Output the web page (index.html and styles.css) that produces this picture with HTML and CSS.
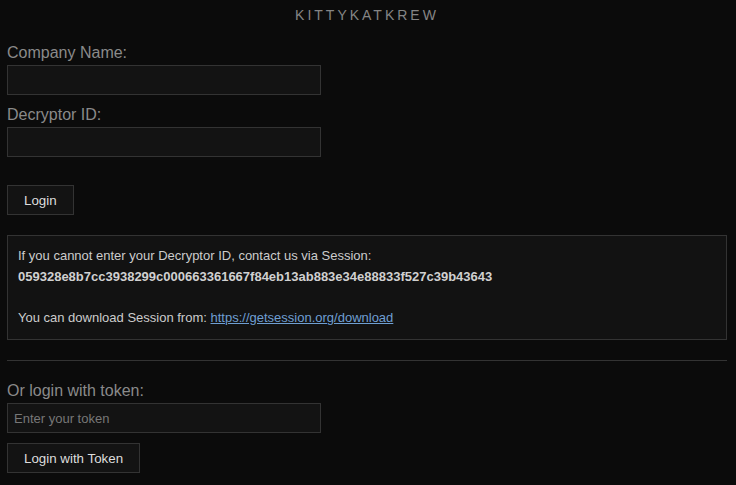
FILE: index.html
```html
<!DOCTYPE html>
<html lang="en">
<head>
<meta charset="utf-8">
<title>KITTYKATKREW</title>
<link rel="stylesheet" href="styles.css">
</head>
<body>
<div class="page">
  <h1 class="brand">KITTYKATKREW</h1>

  <form class="login-form">
    <label class="field-label" for="company">Company Name:</label>
    <input class="field-input" id="company" type="text">

    <label class="field-label" for="decryptor">Decryptor ID:</label>
    <input class="field-input" id="decryptor" type="text">

    <button class="btn btn-login" type="button">Login</button>
  </form>

  <div class="notice">
    <p class="notice-text">If you cannot enter your Decryptor ID, contact us via Session:<br><strong class="session-id">059328e8b7cc3938299c000663361667f84eb13ab883e34e88833f527c39b43643</strong></p>
    <p class="notice-text notice-gap">You can download Session from: <a class="notice-link" href="#">https://getsession.org/download</a></p>
  </div>

  <hr class="divider">

  <form class="token-form">
    <label class="field-label" for="token">Or login with token:</label>
    <input class="field-input" id="token" type="text" placeholder="Enter your token">
    <button class="btn" type="button">Login with Token</button>
  </form>
</div>
</body>
</html>
```

FILE: styles.css
```css
html, body {
  margin: 0;
  padding: 0;
  background: #0b0b0b;
}

body {
  font-family: "Liberation Sans", Arial, sans-serif;
  color: #cccccc;
}

.page {
  width: 720px;
  padding-left: 7px;
}

.brand {
  margin: 4px 0 0;
  font-size: 14px;
  line-height: 22px;
  font-weight: normal;
  letter-spacing: 3px;
  text-align: center;
  color: #858585;
}

.login-form {
  margin-top: 17px;
  display: flex;
  flex-direction: column;
  align-items: flex-start;
}

.token-form {
  display: flex;
  flex-direction: column;
  align-items: flex-start;
}

.field-label {
  display: block;
  font-size: 16px;
  line-height: 19px;
  color: #8a8a8a;
  margin-bottom: 3px;
}

.field-input {
  box-sizing: border-box;
  width: 314px;
  height: 30px;
  margin: 0 0 10px;
  padding: 0 6px;
  background: #131313;
  border: 1px solid #333333;
  border-radius: 0;
  color: #cccccc;
  font-family: "Liberation Sans", Arial, sans-serif;
  font-size: 13px;
  outline: none;
}

.field-input::placeholder {
  color: #777777;
}

.btn {
  box-sizing: border-box;
  height: 30px;
  margin: 0;
  padding: 0 16px;
  background: #131313;
  border: 1px solid #333333;
  border-radius: 0;
  color: #dddddd;
  font-family: "Liberation Sans", Arial, sans-serif;
  font-size: 13.333px;
  cursor: pointer;
}

.btn-login {
  margin-top: 18px;
}

.notice {
  box-sizing: border-box;
  width: 720px;
  margin-top: 20px;
  padding: 10px;
  background: #121212;
  border: 1px solid #333333;
}

.notice-text {
  margin: 0;
  font-size: 13px;
  line-height: 1.6;
  color: #cccccc;
}

.notice-gap {
  margin-top: 1.6em;
}

.session-id {
  font-weight: bold;
  color: #d0d0d0;
}

.notice-link {
  color: #6f9fd2;
  text-decoration: underline;
}

.divider {
  width: 720px;
  height: 0;
  margin: 20px 0 20px;
  border: 0;
  border-top: 1px solid #333333;
}
```
